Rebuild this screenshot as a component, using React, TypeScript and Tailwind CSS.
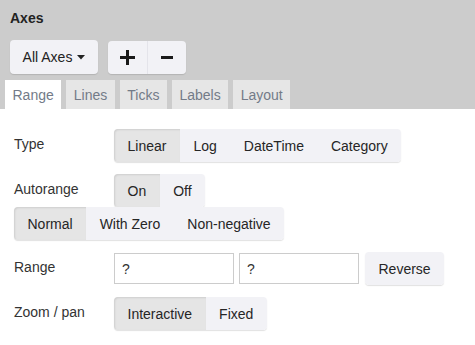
import { ReactNode } from "react";

function Seg({ items, active }: { items: string[]; active: string }) {
  return (
    <div className="flex rounded-[4px] shadow-[0_1px_1px_rgba(0,0,0,0.12)]">
      {items.map((it, i) => (
        <div
          key={it}
          className={
            "flex h-[33px] items-center px-[13.5px] text-[#262626] " +
            (i === 0 ? "rounded-l-[4px] " : "") +
            (i === items.length - 1 ? "rounded-r-[4px] " : "") +
            (it === active ? "bg-[#e5e5e5] shadow-[inset_1px_1px_2px_rgba(0,0,0,0.1)]" : "bg-[#f2f2f6]")
          }
        >
          {it}
        </div>
      ))}
    </div>
  );
}

function Row({ label, children, className = "" }: { label: string; children: ReactNode; className?: string }) {
  return (
    <div className={"flex items-center " + className}>
      <div className="w-[100px] pb-[3px] text-[#333]">{label}</div>
      {children}
    </div>
  );
}

export default function App() {
  const tabs = ["Range", "Lines", "Ticks", "Labels", "Layout"];
  return (
    <div className="h-[345px] w-[475px] bg-white font-['Liberation_Sans',Arial,sans-serif] text-[14px] leading-5">
      <div className="bg-[#cccccc]">
        <div className="pl-[10px] pt-2 font-bold text-[#222]">Axes</div>
        <div className="mt-3 flex items-end pl-[10px]">
          <div className="flex h-[34px] w-[88px] items-center justify-center gap-[5px] rounded-[4px] bg-[#f2f2f6] text-[#222] shadow-[0_1px_1px_rgba(0,0,0,0.12)]">
            All Axes
            <svg width="8" height="5" viewBox="0 0 8 5">
              <path d="M0 0h8L4 4.5z" fill="#222" />
            </svg>
          </div>
          <div className="ml-[10px] flex h-[33px] rounded-[4px] shadow-[0_1px_1px_rgba(0,0,0,0.12)]">
            <div className="flex w-[39px] items-center justify-center rounded-l-[4px] bg-[#f2f2f6]">
              <svg width="15" height="15" viewBox="0 0 15 15">
                <path d="M7.5 0v15M0 7.5h15" stroke="#1a1a1a" strokeWidth="3" />
              </svg>
            </div>
            <div className="flex w-[39px] items-center justify-center rounded-r-[4px] border-l border-[#e4e4ea] bg-[#f2f2f6]">
              <svg width="12" height="3" viewBox="0 0 12 3">
                <path d="M0 1.5h12" stroke="#1a1a1a" strokeWidth="3" />
              </svg>
            </div>
          </div>
        </div>
        <div className="mt-[6px] flex gap-[5px] pl-[5px]">
          {tabs.map((t) => (
            <div
              key={t}
              className={
                "flex h-[29px] items-center px-[7.5px] text-[#737b88] " +
                (t === "Range" ? "bg-white" : "bg-[#e6e6e6]")
              }
            >
              {t}
            </div>
          ))}
        </div>
      </div>
      <div className="pl-[14px] pt-5">
        <Row label="Type">
          <Seg items={["Linear", "Log", "DateTime", "Category"]} active="Linear" />
        </Row>
        <Row label="Autorange" className="mt-3">
          <Seg items={["On", "Off"]} active="On" />
        </Row>
        <div className="flex">
          <Seg items={["Normal", "With Zero", "Non-negative"]} active="Normal" />
        </div>
        <Row label="Range" className="mt-3">
          <div className="flex h-[31px] w-[120px] items-center border border-[#cccccc] px-[7px] text-[#333]">?</div>
          <div className="ml-[5px] flex h-[31px] w-[120px] items-center border border-[#cccccc] px-[7px] text-[#333]">?</div>
          <div className="ml-[6px]">
            <Seg items={["Reverse"]} active="" />
          </div>
        </Row>
        <Row label="Zoom / pan" className="mt-3">
          <Seg items={["Interactive", "Fixed"]} active="Interactive" />
        </Row>
      </div>
    </div>
  );
}
